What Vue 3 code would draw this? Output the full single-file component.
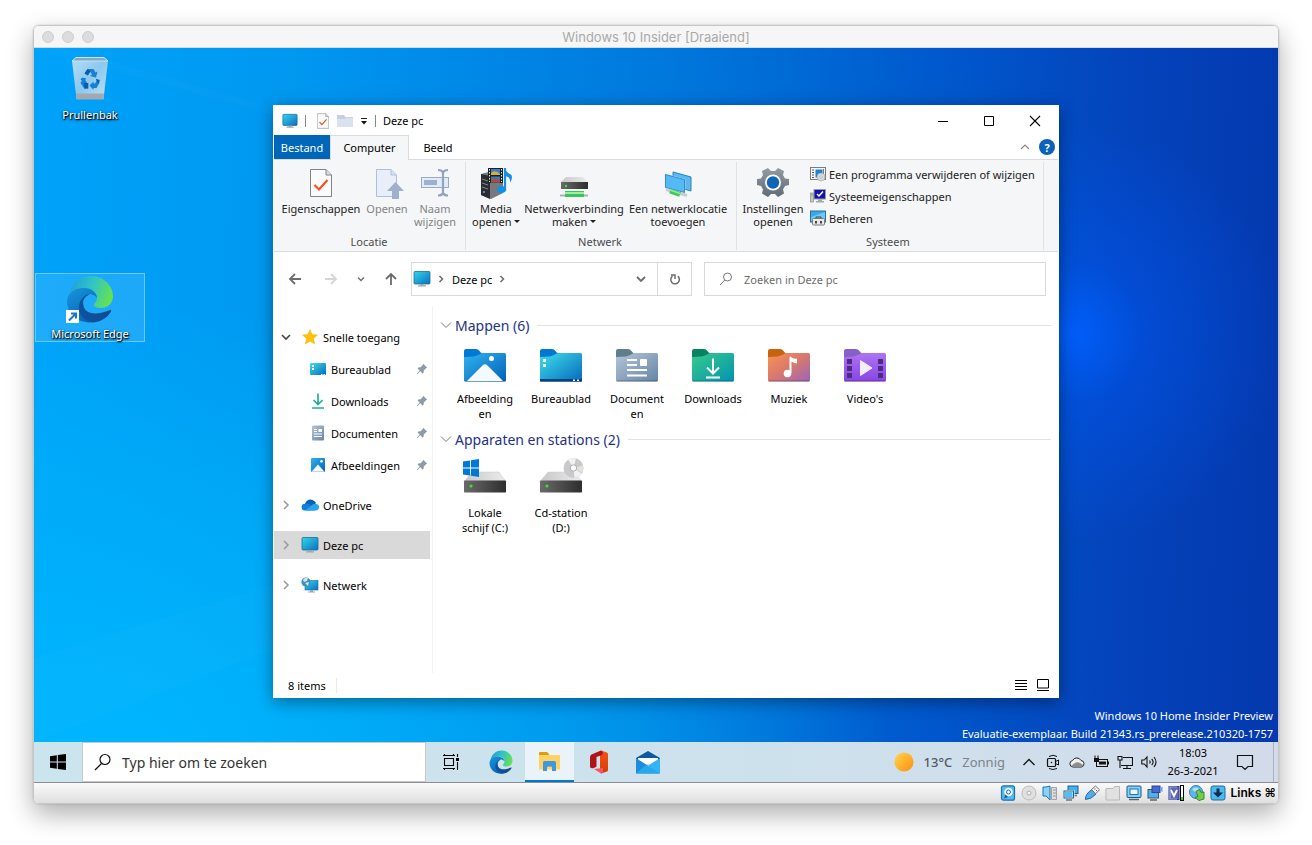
<script setup>
import { ref } from 'vue'

const quickAccess = [
  { label: 'Bureaublad', icon: 'i-desktop' },
  { label: 'Downloads', icon: 'i-download' },
  { label: 'Documenten', icon: 'i-document' },
  { label: 'Afbeeldingen', icon: 'i-picture' },
]
const roots = [
  { label: 'OneDrive', icon: 'i-onedrive' },
  { label: 'Deze pc', icon: 'i-monitor', active: true },
  { label: 'Netwerk', icon: 'i-network' },
]
const folders = [
  { label: 'Afbeeldingen', lines: ['Afbeelding', 'en'], kind: 'pictures' },
  { label: 'Bureaublad', lines: ['Bureaublad'], kind: 'desktop' },
  { label: 'Documenten', lines: ['Document', 'en'], kind: 'documents' },
  { label: 'Downloads', lines: ['Downloads'], kind: 'downloads' },
  { label: 'Muziek', lines: ['Muziek'], kind: 'music' },
  { label: "Video's", lines: ["Video's"], kind: 'videos' },
]
const tabColors = {
  pictures: '#0078d4',
  desktop: '#0078d4',
  documents: '#5f7d8c',
  downloads: '#068462',
  music: '#c5630f',
  videos: '#8661c5',
}
const systemLinks = [
  { label: 'Een programma verwijderen of wijzigen', icon: 'i-programs' },
  { label: 'Systeemeigenschappen', icon: 'i-sysprops' },
  { label: 'Beheren', icon: 'i-manage' },
]
const tray = [
  { label: 'Verborgen pictogrammen', icon: 't-chevron' },
  { label: 'Nu vergaderen', icon: 't-camera' },
  { label: 'OneDrive', icon: 't-cloud' },
  { label: 'Batterij', icon: 't-battery' },
  { label: 'Netwerk', icon: 't-network' },
  { label: 'Volume', icon: 't-volume' },
]
const vmIcons = [
  'v-disk', 'v-cd', 'v-audio', 'v-net', 'v-usb', 'v-folder',
  'v-display', 'v-record', 'v-cpu', 'v-mouse', 'v-key',
]
const query = ref('')
const taskQuery = ref('')
</script>

<template>
  <svg class="defs" aria-hidden="true">
    <defs>
      <linearGradient id="g-monitor" x1="0" y1="0" x2="1" y2="1"><stop offset="0" stop-color="#35d6e6" /><stop offset="1" stop-color="#0a6fc4" /></linearGradient>
      <linearGradient id="g-pictures" x1="0" y1="0" x2="1" y2="1"><stop offset="0" stop-color="#30b4f0" /><stop offset="1" stop-color="#0460b8" /></linearGradient>
      <linearGradient id="g-desktop" x1="0" y1="0" x2="1" y2="1"><stop offset="0" stop-color="#3fe0ea" /><stop offset="1" stop-color="#0668bd" /></linearGradient>
      <linearGradient id="g-documents" x1="0" y1="0" x2="1" y2="1"><stop offset="0" stop-color="#b4c6da" /><stop offset="1" stop-color="#6584a3" /></linearGradient>
      <linearGradient id="g-downloads" x1="0" y1="0" x2="1" y2="1"><stop offset="0" stop-color="#38cb88" /><stop offset="1" stop-color="#0393b2" /></linearGradient>
      <linearGradient id="g-music" x1="0" y1="0" x2="1" y2="1"><stop offset="0" stop-color="#fc9150" /><stop offset=".5" stop-color="#d8786e" /><stop offset="1" stop-color="#9964bb" /></linearGradient>
      <linearGradient id="g-videos" x1="0" y1="0" x2="0" y2="1"><stop offset="0" stop-color="#ad74f2" /><stop offset="1" stop-color="#8745e5" /></linearGradient>
      <linearGradient id="g-edge-top" x1="0" y1=".2" x2="1" y2=".5"><stop offset="0" stop-color="#1e9fd8" /><stop offset=".5" stop-color="#2fc4c8" /><stop offset="1" stop-color="#66e152" /></linearGradient>
      <linearGradient id="g-edge-left" x1="0" y1="0" x2=".6" y2="1"><stop offset="0" stop-color="#1797dc" /><stop offset="1" stop-color="#0a63b4" /></linearGradient>
      <linearGradient id="g-edge-dark" x1="0" y1="0" x2="1" y2="0"><stop offset="0" stop-color="#0c549f" /><stop offset="1" stop-color="#114b8f" /></linearGradient>
      <linearGradient id="g-steel" x1="0" y1="0" x2="1" y2="0"><stop offset="0" stop-color="#6a6a6a" /><stop offset="1" stop-color="#2e2e2e" /></linearGradient>
      <linearGradient id="g-lid" x1="0" y1="0" x2="1" y2="0"><stop offset="0" stop-color="#c8c8c8" /><stop offset="1" stop-color="#ebebed" /></linearGradient>
      <linearGradient id="g-bin" x1="0" y1="0" x2="1" y2="1"><stop offset="0" stop-color="#b5dff6" /><stop offset=".5" stop-color="#8cc8ee" /><stop offset="1" stop-color="#bfe1f5" /></linearGradient>
      <linearGradient id="g-sun" x1="0" y1="0" x2="1" y2="1"><stop offset="0" stop-color="#ffd84d" /><stop offset="1" stop-color="#ff8c0f" /></linearGradient>
      <linearGradient id="g-gear" x1="0" y1="0" x2="0" y2="1"><stop offset="0" stop-color="#929aa2" /><stop offset="1" stop-color="#616b75" /></linearGradient>
      <linearGradient id="g-office" x1="0" y1="0" x2="0" y2="1"><stop offset="0" stop-color="#f65314" /><stop offset="1" stop-color="#d83b01" /></linearGradient>
    </defs>

    <symbol id="i-monitor" viewBox="0 0 18 16">
      <rect x="1" y=".5" width="16" height="12.5" rx="1" fill="url(#g-monitor)" stroke="#1c6f96" stroke-width=".8" />
      <path d="M7.500 13h3v1.500h-3zM5 14.300h8v1.200H5z" fill="#9aa7b2" />
    </symbol>
    <symbol id="i-edge" viewBox="0 0 48 48">
      <path d="M3 22C4 10 13 1 25 1C38 1 47 11 47 21C47 29 41 33 35 33C31 33 28 32 28 30C28 28 31 27 31 23C31 17 26 13 19 13C11 13 5 17 3 22Z" fill="url(#g-edge-top)" />
      <path d="M1 26C2 17 9 13 18 13C25 13 31 18 31 23C29 20 26 19 23 19C17 22 15 30 20 38C23 43 27 46 30 47C14 50 1 40 1 26Z" fill="url(#g-edge-left)" />
      <path d="M17 27C17 40 30 41 44 35C46 35 45 37 44 38C40 44 32 48 26 47C17 46 12 38 13 31C14 24 19 19 24 19C20 21 17 24 17 27Z" fill="url(#g-edge-dark)" />
    </symbol>
    <symbol id="i-check" viewBox="0 0 22 28">
      <path d="M.5.5H16l5.500 5.500V27.500H.5Z" fill="#fbfbfb" stroke="#7e8487" />
      <path d="M16 .5V6h5.500" fill="#ddd" stroke="#7e8487" />
      <path d="M4.500 16l4.500 4.500L17.500 11" fill="none" stroke="#f4511e" stroke-width="2.200" />
    </symbol>
    <symbol id="i-star" viewBox="0 0 16 16"><path d="M8 .8l2.200 4.700 5.200.6-3.900 3.500 1.100 5.200L8 12.300l-4.600 2.500 1.100-5.200L.6 6.100l5.200-.6z" fill="#fdc30a" stroke="#f5ad00" stroke-width=".5" /></symbol>
    <symbol id="i-desktop" viewBox="0 0 16 16"><rect y="2" width="16" height="12" rx="1" fill="url(#g-desktop)" /><path d="M2 4h2v2H2zM2 7h2v2H2zM11 13h1.500v1H11zM13.500 13H15v1h-1.500z" fill="#fff" /></symbol>
    <symbol id="i-download" viewBox="0 0 16 16"><path d="M8 .5V11M3.500 7L8 11.500 12.500 7M2 15h12" fill="none" stroke="#1fb193" stroke-width="1.700" /></symbol>
    <symbol id="i-document" viewBox="0 0 16 16"><rect x="2" y=".5" width="12" height="15" rx="1" fill="url(#g-documents)" /><path d="M4 4.500h3M4 6.500h3M4 9h8M4 11.500h8" stroke="#fff" stroke-width="1.100" /><path d="M8.500 4h3.500v3H8.500z" fill="#fff" /></symbol>
    <symbol id="i-picture" viewBox="0 0 16 16"><rect x="1" y="1" width="14" height="14" rx="1" fill="url(#g-pictures)" /><path d="M1.500 14.800L8 7.500l6.500 7.300z" fill="#f3f9ff" /><circle cx="11.500" cy="4.300" r="1.300" fill="#fff" /></symbol>
    <symbol id="i-onedrive" viewBox="0 0 18 16"><path d="M4 7Q5 3 9 2.500q4 0 6 3.500L11 10H3z" fill="#0a5fb4" /><path d="M4 13.500a3.300 3.300 0 0 1 0-6.700q2.500-1 5 .7l5 6z" fill="#117fd8" /><path d="M4 13.500L11 8q2.500-2 4.500-1a3.300 3.300 0 0 1-1 6.500z" fill="#27a5ee" /></symbol>
    <symbol id="i-network" viewBox="0 0 18 16"><rect x="4" y="3.500" width="13" height="9.500" fill="url(#g-monitor)" stroke="#1c6f96" stroke-width=".6" /><path d="M9 13h3v1.500H9zM7 14.500h7v1H7z" fill="#9aa7b2" /><circle cx="5" cy="5" r="4.600" fill="#3f8fb8" /><path d="M2 3q2-3 5-2L6 4 3 5zM4 6l4-1-1 4z" fill="#cfe5ea" /></symbol>
    <symbol id="i-pin" viewBox="0 0 12 12"><path d="M7.200.8l4 4-1.200.4-2.200 2.200-.2 2.300-1 .8-2.300-2.300L1.200 11.200l-.5-.5L3.700 7.600 1.500 5.400l.8-.9 2.300-.3L6.800 2z" fill="#8e9ba5" /></symbol>
    <symbol id="i-programs" viewBox="0 0 16 16"><rect x=".5" y="1.500" width="15" height="12" fill="#f7f7f7" stroke="#7c7c7c" /><path d="M2 4h2M2 6.500h2M2 9h2M2 11.500h2" stroke="#555" /><path d="M5.500 3.500h7v8h-7z" fill="#1b83d6" /><path d="M13.500 3v5" stroke="#777" /><circle cx="11" cy="11" r="4" fill="#d7dbdf" stroke="#999" stroke-width=".5" /><circle cx="11" cy="11" r="1.200" fill="#fff" stroke="#888" stroke-width=".5" /></symbol>
    <symbol id="i-sysprops" viewBox="0 0 16 16"><rect x=".5" y="5" width="3" height="9" fill="#c3c8cb" stroke="#7a7f82" stroke-width=".6" /><rect x="4" y="1.500" width="11.500" height="9.500" fill="#1212b4" stroke="#9c9c9c" /><path d="M7 6l2 2 4-4.500" fill="none" stroke="#fff" stroke-width="1.500" /><path d="M8 11.500h4v1.500h2v1.500H6V13h2z" fill="#a3a8ab" /><circle cx="2" cy="7" r=".7" fill="#2dbd38" /></symbol>
    <symbol id="i-manage" viewBox="0 0 16 16"><rect x=".5" y="1" width="15" height="11" fill="#39a9ee" stroke="#2a6e99" /><path d="M1 7l14-5v9H1z" fill="#70c8f8" /><path d="M6 8.500V7h5v1.500" fill="none" stroke="#444" /><rect x="2.500" y="8.500" width="12" height="6.500" rx="1" fill="#e9e9e9" stroke="#7b7b7b" /><path d="M5 11h2v2.500H5zM10 11h2v2.500h-2z" fill="#444" /></symbol>
    <symbol id="i-drive" viewBox="0 0 44 22"><path d="M9 1h27l6.500 9h-41z" fill="url(#g-lid)" stroke="#cacaca" stroke-width=".5" /><rect x="1" y="9.500" width="42" height="12" rx=".8" fill="url(#g-steel)" /><circle cx="8" cy="15" r="1.600" fill="#38e238" /></symbol>

    <symbol id="t-chevron" viewBox="0 0 16 16"><path d="M2.500 11L8 5.500 13.500 11" fill="none" stroke="#111" stroke-width="1.300" /></symbol>
    <symbol id="t-camera" viewBox="0 0 16 16"><path d="M4 2.500q4-2.500 8 0M4 14.500q4 2 8 0" fill="none" stroke="#111" /><rect x="2.500" y="4.500" width="8" height="8" rx="1" fill="none" stroke="#111" stroke-width="1.200" /><path d="M10.500 7.500l3-1.500v5l-3-1.500" fill="none" stroke="#111" /><circle cx="6.500" cy="8.500" r=".8" fill="#111" /></symbol>
    <symbol id="t-cloud" viewBox="0 0 16 16"><path d="M3.800 13a3.300 3.300 0 0 1-.3-6.500A4.800 4.800 0 0 1 12 6.500a3.300 3.300 0 0 1 .5 6.500z" fill="#f0f0f0" stroke="#222" /><path d="M2 12.300q3-3.500 6-4t6.500 3.500l-2 .8H4z" fill="#8d8d8d" /></symbol>
    <symbol id="t-battery" viewBox="0 0 16 16"><rect x="3.500" y="5.500" width="11" height="7" fill="none" stroke="#111" /><path d="M6 7.500h7v3H6zM15 7.500h1v3h-1zM1 4h5v4H1z" fill="#111" /><path d="M2 1.500V4M5 1.500V4M3.500 8v3" stroke="#111" /></symbol>
    <symbol id="t-network" viewBox="0 0 16 16"><path d="M6 3.500h9.500v8H4M1 2.500h4v3.500H1zM3 6v8M10 11.500V14M6 14.500h8" fill="none" stroke="#111" stroke-width="1.100" /></symbol>
    <symbol id="t-volume" viewBox="0 0 16 16"><path d="M.8 6h2.500L6 3v10L3.300 10H.8zM8.500 6.500q1.300 1.500 0 3M10.700 4.800q2.800 3.200 0 6.400M13 3q4 5 0 10" fill="none" stroke="#111" stroke-width="1.100" /></symbol>

    <symbol id="v-disk" viewBox="0 0 16 16"><rect x="1.500" y=".8" width="13" height="14.400" rx="2" fill="#55b9ef" stroke="#1973b6" stroke-width="1.200" /><circle cx="8.500" cy="7" r="4.300" fill="#eef8fe" /><circle cx="8.500" cy="7" r="2" fill="none" stroke="#1772b5" /><path d="M4 13.500l1.500-4L8 12z" fill="#145c9b" /></symbol>
    <symbol id="v-cd" viewBox="0 0 16 16"><circle cx="8" cy="8" r="7" fill="#e0e0e0" stroke="#bcbcbc" /><circle cx="8" cy="8" r="2" fill="#f8f8f8" stroke="#aaa" /></symbol>
    <symbol id="v-audio" viewBox="0 0 16 16"><path d="M1 2h3l4-1v14l-4-4H1z" fill="#8ed1f5" stroke="#1b74b5" /><path d="M9.500 2.500h5v12h-5z" fill="#dedede" stroke="#a3a3a3" /><path d="M11 5h3M11 8h3M11 11h3" stroke="#999" /></symbol>
    <symbol id="v-net" viewBox="0 0 16 16"><rect x="5" y="1" width="10" height="7.500" fill="#3fb2f2" stroke="#215f88" /><path d="M9 10.500h5" stroke="#6c7780" stroke-width="1.500" /><rect x="1" y="6" width="9.500" height="7" fill="#54bdf5" stroke="#e9f4fb" stroke-width="2" /><rect x="1" y="6" width="9.500" height="7" fill="none" stroke="#215f88" /><path d="M3 15h6" stroke="#6c7780" stroke-width="1.500" /></symbol>
    <symbol id="v-usb" viewBox="0 0 16 16"><path d="M1.500 14.500Q1 9 8 4.500L12 9q-5 5.500-10.500 5.500z" fill="#52aee9" stroke="#1b6cab" /><path d="M7.500 4.500L11.500 1l4 3.800-4 4z" fill="#f4f4f4" stroke="#737373" /><path d="M10.500 4h1M12 5.500h1" stroke="#555" /></symbol>
    <symbol id="v-folder" viewBox="0 0 16 16"><path d="M1 3.500h7l1.500-2h5V15H1z" fill="#e1e1e1" stroke="#b8b8b8" /></symbol>
    <symbol id="v-display" viewBox="0 0 16 16"><rect x="1" y="1" width="14" height="11.500" rx="1" fill="#83d0f9" stroke="#20577c" /><rect x="4" y="4" width="8" height="5.500" fill="#e9f8ff" stroke="#1974b4" /><path d="M3 14.500h10" stroke="#496878" stroke-width="1.500" /></symbol>
    <symbol id="v-record" viewBox="0 0 16 16"><rect x="1" y="4.500" width="10.500" height="8.500" fill="#54afe4" stroke="#315b79" /><rect x="5" y="1" width="8" height="6.500" fill="#4369d2" stroke="#2c4594" /><path d="M13 3l2.500-1.500V7L13 5.500" fill="#7d98e7" /><path d="M3 15h7" stroke="#666" stroke-width="1.500" /></symbol>
    <symbol id="v-cpu" viewBox="0 0 16 16"><rect x="1" y="1.500" width="10" height="13" fill="#5b68bc" stroke="#2f3b88" /><path d="M3 5l3 6 3-6" fill="none" stroke="#fff" stroke-width="1.800" /><path d="M2 1v14M4 1v1.500M6 1v1.500M8 1v1.500M4 13.500V15M6 13.500V15M8 13.500V15" stroke="#cdd2f2" stroke-width=".8" /><rect x="12.500" y=".5" width="3" height="15" fill="#fff" stroke="#000" /><path d="M13 12h2v3h-2z" fill="#20e020" /></symbol>
    <symbol id="v-mouse" viewBox="0 0 16 16"><circle cx="7" cy="7" r="6.500" fill="#5fb4ee" stroke="#2f83c2" /><path d="M3 4q4-3 7 0l-4 3z" fill="#b7e0f8" /><path d="M7 6.500l3.500-2 1.500 3 3-.5V14l-5 1.500-4-3 3-1z" fill="#6fce4a" stroke="#3a8a2a" /></symbol>
    <symbol id="v-key" viewBox="0 0 16 16"><rect x="1" y="1" width="14" height="14" rx="2" fill="#4fb8ee" stroke="#1b6ea8" /><path d="M6.500 3.500h3v4H13L8 12.500 3 7.500h3.500z" fill="#0b2f4d" /></symbol>
  </svg>

  <main class="page">
    <section class="vm">
      <header class="vm-title">
        <span class="lights"><i></i><i></i><i></i></span>
        <h1>Windows 10 Insider [Draaiend]</h1>
      </header>

      <div class="desktop">
        <svg class="rays" viewBox="0 0 1244 694" preserveAspectRatio="none" aria-hidden="true">
          <path d="M0 0L30 0L700 190L1040 290Z" fill="#fff" opacity=".015" />
          <path d="M0 610L1040 290L0 694Z" fill="#fff" opacity=".015" />
        </svg>

        <button class="shortcut bin">
          <svg viewBox="0 0 40 46" width="40" height="46">
            <path d="M2 5L6 1.500H34L38 5 33.500 43H6.500Z" fill="url(#g-bin)" />
            <path d="M2 5L6 1.500H34L38 5Z" fill="#83a9c4" stroke="#c8e3f3" />
            <path d="M6 37.500H34L33.500 43.500H6.500Z" fill="#a3a9b3" />
            <g fill="#1580d4"><path d="M14.500 17.500l3-4.500h6l2 3.500 2-1-1.500 6-6-1.500 2-1.200-1.700-3-2.500 4z" /><path d="M12 21.500l4.500 1-1.300 1.200 2 3.300h1v5.500h-4L10.500 27l1.500-2.500-1.500-.8z" /><path d="M26 23l3.500 1-.2 3-2.800 5h-3v2l-4-4.500 4-4v2h1.500l1.500-2.500z" /></g>
            <path d="M14.500 17.500l3-4.500 3 2-2.500 4zM14 27h4.200v5.500h-4zM26 23l3.500 1-1 4z" fill="#0a5cae" />
          </svg>
          <span>Prullenbak</span>
        </button>

        <button class="shortcut edge">
          <svg viewBox="0 0 52 50" width="52" height="50">
            <use href="#i-edge" x="2" y="0" width="48" height="48" />
            <path d="M2 35h13v13H2z" fill="#fff" />
            <path d="M5 45.500l6-6M7 38.500h5v5" fill="none" stroke="#1a78c8" stroke-width="2" />
          </svg>
          <span>Microsoft Edge</span>
        </button>

        <p class="watermark">Windows 10 Home Insider Preview<br />Evaluatie-exemplaar. Build 21343.rs_prerelease.210320-1757</p>

        <section class="explorer">
          <header class="titlebar">
            <svg class="app-icon" width="16" height="16"><use href="#i-monitor" /></svg>
            <span class="bar"></span>
            <button class="quick" aria-label="Eigenschappen"><svg width="12" height="16"><use href="#i-check" /></svg></button>
            <button class="quick folder" aria-label="Nieuwe map"><svg width="16" height="14" viewBox="0 0 16 14"><path d="M0 1h7l1.500 2H16v10H0z" fill="#c5d1e2" /><path d="M0 5h8l1-1h7v9H0z" fill="#d8e2f0" /></svg></button>
            <button class="quick more" aria-label="Werkbalk aanpassen"><svg width="8" height="8" viewBox="0 0 8 8"><path d="M1 1.500h6" stroke="#222" /><path d="M1 4h6L4 7.500z" fill="#111" /></svg></button>
            <span class="bar"></span>
            <h2>Deze pc</h2>
            <div class="win-buttons">
              <button aria-label="Minimaliseren"><svg width="12" height="12" viewBox="0 0 12 12"><path d="M1 6.500h10" stroke="#000" /></svg></button>
              <button aria-label="Maximaliseren"><svg width="12" height="12" viewBox="0 0 12 12"><path d="M1.500 1.500h9v9h-9z" fill="none" stroke="#000" /></svg></button>
              <button aria-label="Sluiten"><svg width="12" height="12" viewBox="0 0 12 12"><path d="M1 1l10 10M11 1L1 11" stroke="#000" stroke-width="1.100" /></svg></button>
            </div>
          </header>

          <nav class="tabs">
            <button class="file">Bestand</button>
            <button class="current">Computer</button>
            <button class="plain">Beeld</button>
            <span class="spacer"></span>
            <button class="collapse" aria-label="Lint samenvouwen"><svg width="10" height="10" viewBox="0 0 10 10"><path d="M1 7l4-4 4 4" fill="none" stroke="#8a8a8a" stroke-width="1.200" /></svg></button>
            <button class="help" aria-label="Help">?</button>
          </nav>

          <div class="ribbon">
            <section class="group location">
              <div class="tools">
                <button class="tool w84"><svg width="34" height="34" viewBox="0 0 34 34"><use href="#i-check" x="6" y="3" width="22" height="28" /></svg>Eigenschappen</button>
                <button class="tool w48" disabled><svg width="34" height="34" viewBox="0 0 34 34"><path d="M6.500 3.500H21l5.500 5.500V30.500H6.500Z" fill="#e8effa" stroke="#aebfda" /><path d="M21 3.500V9h5.500" fill="#d5e0f0" stroke="#aebfda" /><path d="M22 33V25h-5L25.500 16 34 25h-5v8z" fill="#9fb0cc" /></svg>Openen</button>
                <button class="tool w48" disabled><svg width="34" height="34" viewBox="0 0 34 34"><rect x="3.500" y="11.500" width="27" height="10" fill="#e3ebf7" stroke="#9aaac6" /><path d="M6 14h13v5H6z" fill="#9fb0cc" /><path d="M20 4q4 0 5 2.500Q26 4 30 4M20 29.500q4 0 5-2.500 1 2.500 5 2.500M25 6v22" fill="none" stroke="#93a4c3" stroke-width="2.200" /></svg>Naam<br />wijzigen</button>
              </div>
              <h3>Locatie</h3>
            </section>

            <section class="group network">
              <div class="tools">
                <button class="tool w48">
                  <svg width="34" height="34" viewBox="0 0 34 34">
                    <path d="M2 8l11-3 11 4v18l-12 6L2 29z" fill="#77797e" /><path d="M2 8l9 2v23l-9-4z" fill="#2a2c31" /><path d="M3 13l6 2M3 17l6 2M3 21l6 2" stroke="#80858c" /><circle cx="5" cy="26" r="1" fill="#40b8f5" />
                    <rect x="9" y="2" width="15" height="15" fill="#202020" /><path d="M12 3h9v6h-9z" fill="#3c7cc8" /><path d="M12 7q4-4 9 1v1h-9z" fill="#d6ae3a" /><path d="M12 10.500h9v6h-9z" fill="#3579ba" /><path d="M12 14q4-3 9 1v1.500h-9z" fill="#b4493b" />
                    <path d="M10.500 3v13M22.500 3v13" stroke="#eee" stroke-dasharray="1.500 1.500" />
                    <path d="M26 2v21" stroke="#1191e6" stroke-width="2.200" /><path d="M26 2q1 4 5 6t0 9q1-6-5-7z" fill="#1191e6" /><ellipse cx="22.500" cy="23.500" rx="4.800" ry="3.500" fill="#1191e6" />
                  </svg>Media<br />openen <i class="caret"></i>
                </button>
                <button class="tool w108">
                  <svg width="34" height="34" viewBox="0 0 34 34">
                    <path d="M9 11h17l5 5H4z" fill="url(#g-lid)" /><rect x="4" y="16" width="27" height="7" fill="url(#g-steel)" /><circle cx="9" cy="20" r="1.200" fill="#3be53b" />
                    <path d="M3 29.500h28" stroke="#aab2b5" stroke-width="2" /><rect x="8" y="25" width="19" height="6" fill="#3cc45a" /><path d="M8 27h19" stroke="#9cf0a2" stroke-width="2" />
                  </svg>Netwerkverbinding<br />maken <i class="caret"></i>
                </button>
                <button class="tool w100">
                  <svg width="34" height="34" viewBox="0 0 34 34">
                    <path d="M12 6l18 5v14l-18-5z" fill="#5ab9f2" stroke="#2b82b8" /><path d="M4.500 8.500l19 5v13l-19-5z" fill="#53b9f8" stroke="#d8eef9" stroke-width="1.500" /><path d="M4.500 8.500l19 5v13l-19-5z" fill="#53b9f8" stroke="#2878ad" stroke-width=".8" />
                    <path d="M5 23.500l21 6" stroke="#c8cdcf" stroke-width="3" /><path d="M9 25l10 3.500" stroke="#40c857" stroke-width="5" /><path d="M9 24l10 3.500" stroke="#93ec99" stroke-width="1.500" />
                  </svg>Een netwerklocatie<br />toevoegen
                </button>
              </div>
              <h3>Netwerk</h3>
            </section>

            <section class="group system">
              <div class="tools">
                <button class="tool w64">
                  <svg width="34" height="34" viewBox="0 0 34 34">
                    <path d="M12 2l3 3h4l3-3 6 3-1 4 2 3.500 4 .5v6l-4 1-2 3.500 1 4-6 3.500-3-3h-4l-3 3-6-3.500 1-4L5 20l-4-1v-6l4-.5L7 9 6 5z" fill="url(#g-gear)" />
                    <circle cx="17" cy="16.500" r="8" fill="#fff" /><circle cx="17" cy="16.500" r="6.200" fill="#0f66b8" />
                  </svg>Instellingen<br />openen
                </button>
                <ul class="sys-list">
                  <li v-for="item in systemLinks" :key="item.label"><button><svg width="16" height="16"><use :href="'#' + item.icon" /></svg>{{ item.label }}</button></li>
                </ul>
              </div>
              <h3>Systeem</h3>
            </section>
          </div>

          <div class="address-row">
            <div class="history">
              <button aria-label="Vorige"><svg width="14" height="14" viewBox="0 0 14 14"><path d="M13 7H2M7 2L2 7l5 5" fill="none" stroke="#6c6c6c" stroke-width="1.800" /></svg></button>
              <button aria-label="Volgende" disabled><svg width="14" height="14" viewBox="0 0 14 14"><path d="M1 7h11M7 2l5 5-5 5" fill="none" stroke="#d5d5d5" stroke-width="1.800" /></svg></button>
              <button class="narrow" aria-label="Recente locaties"><svg width="8" height="8" viewBox="0 0 8 8"><path d="M1 2.500l3 3 3-3" fill="none" stroke="#6c6c6c" stroke-width="1.400" /></svg></button>
              <button aria-label="Omhoog"><svg width="14" height="14" viewBox="0 0 14 14"><path d="M7 13V2M2 7l5-5 5 5" fill="none" stroke="#6c6c6c" stroke-width="1.800" /></svg></button>
            </div>
            <div class="address">
              <svg width="18" height="16"><use href="#i-monitor" /></svg>
              <svg class="sep" width="6" height="8" viewBox="0 0 6 8"><path d="M1.500 1L4.500 4l-3 3" fill="none" stroke="#6c6c6c" stroke-width="1.500" /></svg>
              <button class="crumb">Deze pc</button>
              <svg class="sep" width="6" height="8" viewBox="0 0 6 8"><path d="M1.500 1L4.500 4l-3 3" fill="none" stroke="#6c6c6c" stroke-width="1.500" /></svg>
              <span class="spacer"></span>
              <button class="drop" aria-label="Vorige locaties"><svg width="10" height="8" viewBox="0 0 10 8"><path d="M1 2l4 4 4-4" fill="none" stroke="#6c6c6c" stroke-width="1.800" /></svg></button>
              <button class="refresh" aria-label="Vernieuwen"><svg width="14" height="14" viewBox="0 0 14 14"><path d="M9.800 4.200A4.300 4.300 0 1 1 4.500 4.100M3 3h4v4" fill="none" stroke="#6c6c6c" stroke-width="1.500" /></svg></button>
            </div>
            <label class="search">
              <svg width="14" height="14" viewBox="0 0 14 14"><circle cx="8.500" cy="5" r="4" fill="none" stroke="#777" /><path d="M5.800 8L1 13" stroke="#777" /></svg>
              <input v-model="query" type="text" placeholder="Zoeken in Deze pc" aria-label="Zoeken in Deze pc" />
            </label>
          </div>

          <div class="panes">
            <nav class="tree">
              <button class="row"><svg class="twisty" width="10" height="10" viewBox="0 0 10 10"><path d="M1 3l4 4 4-4" fill="none" stroke="#444" stroke-width="1.600" /></svg><svg width="18" height="16"><use href="#i-star" /></svg>Snelle toegang</button>
              <button v-for="item in quickAccess" :key="item.label" class="row child">
                <svg width="16" height="16"><use :href="'#' + item.icon" /></svg>{{ item.label }}
                <svg class="pin" width="12" height="12"><use href="#i-pin" /></svg>
              </button>
              <button v-for="item in roots" :key="item.label" class="row root" :class="{ active: item.active }">
                <svg class="twisty" width="10" height="10" viewBox="0 0 10 10"><path d="M3 1l4 4-4 4" fill="none" stroke="#999" stroke-width="1.500" /></svg>
                <svg width="18" height="16"><use :href="'#' + item.icon" /></svg>{{ item.label }}
              </button>
            </nav>

            <div class="content">
              <section class="block">
                <h3><svg width="12" height="12" viewBox="0 0 12 12"><path d="M1 3.500l5 5 5-5" fill="none" stroke="#777" /></svg>Mappen (6)</h3>
                <div class="tiles">
                  <button v-for="f in folders" :key="f.label" class="tile">
                    <svg width="44" height="48" viewBox="0 0 44 48">
                      <g transform="translate(0 7)">
                        <path d="M1 3q0-2 2-2h10q2 0 3.500 2t3 2.500V10H1z" :fill="tabColors[f.kind]" />
                        <path d="M1 9q12 0 15-2.500Q18 5 20 5H41.500q1.500 0 1.500 1.500V32q0 1.500-1.500 1.500H2.500Q1 33.500 1 32z" :fill="'url(#g-' + f.kind + ')'" />
                        <path d="M1.500 33h41" stroke="#000" stroke-opacity=".3" />
                        <g v-if="f.kind === 'pictures'" fill="#fff"><path d="M4 33L19.500 17.500Q22 15 24.500 17.500L40 33z" fill="#f2f9ff" /><circle cx="28.500" cy="10.500" r="2.500" /></g>
                        <g v-else-if="f.kind === 'desktop'" fill="#fff"><path d="M1 31h42v2.500H1z" fill="#053f83" /><path d="M4 11h3v3H4zM4 16h3v3H4zM34 31.500h2v1.500h-2zM38 31.500h2v1.500h-2z" /></g>
                        <g v-else-if="f.kind === 'documents'"><path d="M12 12h10M12 17h10M12 22h20M12 27.500h20" stroke="#fff" stroke-width="2" /><rect x="25" y="11" width="7" height="7" rx="1" fill="#fff" /></g>
                        <path v-else-if="f.kind === 'downloads'" d="M22 10.500V25M16 19.500l6 6 6-6M15 29.500h14" fill="none" stroke="#fff" stroke-width="2" />
                        <g v-else-if="f.kind === 'music'" fill="#fff"><path d="M22.500 9l1-.5q3 3 6.500 2v5q-3 0-5.500-2V25h-2z" /><circle cx="20.500" cy="25.500" r="3.800" /></g>
                        <g v-else><path d="M4 11h5v5H4zM4 18h5v5H4zM4 25h5v5H4zM35 11h5v5h-5zM35 18h5v5h-5zM35 25h5v5h-5z" fill="#4c2b80" /><path d="M17.500 12.500v15L29 20z" fill="#f4eefb" stroke="#f4eefb" stroke-linejoin="round" /></g>
                      </g>
                    </svg>
                    <span><template v-for="(line, n) in f.lines" :key="line"><br v-if="n" />{{ line }}</template></span>
                  </button>
                </div>
              </section>

              <section class="block">
                <h3><svg width="12" height="12" viewBox="0 0 12 12"><path d="M1 3.500l5 5 5-5" fill="none" stroke="#777" /></svg>Apparaten en stations (2)</h3>
                <div class="tiles">
                  <button class="tile">
                    <svg width="44" height="48" viewBox="0 0 44 48">
                      <use href="#i-drive" x="0" y="16" width="44" height="22" />
                      <path d="M0 6.500l7-1v7H0zM8 5.300L16 4v8.500H8zM0 13.500h7v7l-7-1zM8 13.500h8V22l-8-1.200z" fill="#0078d7" />
                    </svg>
                    <span>Lokale<br />schijf (C:)</span>
                  </button>
                  <button class="tile">
                    <svg width="46" height="48" viewBox="0 0 46 48">
                      <use href="#i-drive" x="1" y="16" width="44" height="22" />
                      <circle cx="35.500" cy="13" r="10" fill="#c9c9cb" /><path d="M35.500 13L30 4.500Q34 2 38 3.500zM35.500 13l8 5.500q-3 4-7 4.200z" fill="#f2f2f4" /><path d="M35.500 13l9.500-2.500q1 4-1 7z" fill="#dfe5da" /><circle cx="35.500" cy="13" r="3.200" fill="#fff" stroke="#adadad" />
                    </svg>
                    <span>Cd-station<br />(D:)</span>
                  </button>
                </div>
              </section>
            </div>
          </div>

          <footer class="status">
            <span class="count">8 items</span>
            <span class="spacer"></span>
            <button aria-label="Details"><svg width="12" height="12" viewBox="0 0 12 12"><path d="M0 1.500h12M0 4.500h12M0 7.500h12M0 10.500h12" stroke="#000" /></svg></button>
            <button aria-label="Grote pictogrammen"><svg width="12" height="12" viewBox="0 0 12 12"><path d="M.5.5h11v8.500H.5zM0 11.500h12" fill="none" stroke="#000" /></svg></button>
          </footer>
        </section>
      </div>

      <footer class="taskbar">
        <button class="start" aria-label="Start"><svg width="16" height="16" viewBox="0 0 16 16"><path d="M0 2.200l6.800-1v6.300H0zM7.800 1L16 0v7.500H7.800zM0 8.500h6.800v6.300l-6.800-1zM7.800 8.500H16V16l-8.200-1z" fill="#000" /></svg></button>
        <label class="task-search">
          <svg width="18" height="18" viewBox="0 0 18 18"><circle cx="11" cy="6.500" r="5" fill="none" stroke="#111" stroke-width="1.200" /><path d="M7.500 10.500L1 17" stroke="#111" stroke-width="1.200" /></svg>
          <input v-model="taskQuery" type="text" placeholder="Typ hier om te zoeken" aria-label="Typ hier om te zoeken" />
        </label>
        <div class="apps">
          <button aria-label="Taakweergave"><svg width="16" height="16" viewBox="0 0 16 16"><path d="M1.500 4.500h9v7h-9zM0 1.500h12M0 14.500h12M1.500 0v1.500M10.500 0v1.500M1.500 14.500V16M10.500 14.500V16M14.500 0v3M14.500 8v8" fill="none" stroke="#000" stroke-width="1.100" /><path d="M13 4h3v3h-3z" /></svg></button>
          <button aria-label="Microsoft Edge"><svg width="24" height="24"><use href="#i-edge" /></svg></button>
          <button class="open" aria-label="Verkenner"><svg width="22" height="22" viewBox="0 0 22 22"><path d="M0 3q0-1 1-1h7l2 2v3H0z" fill="#dd9c08" /><path d="M0 5h21v14.500H0z" fill="#fed264" /><path d="M4 21v-8.500q0-1.500 1.500-1.500h10q1.500 0 1.500 1.500V21h-4v-3.500q0-1-1-1H9q-1 0-1 1V21z" fill="#3f97de" /></svg></button>
          <button aria-label="Office"><svg width="18" height="24" viewBox="0 0 18 24"><path d="M11 .5L17 2.500Q18 3 18 4v16q0 1-1 1.500l-6 2q-1-1-1-3V5z" fill="url(#g-office)" /><path d="M11 .5Q14 2 12 5L6.500 7v9.500L4 18q-3 1-4-1V7q0-1.500 1.500-2.500z" fill="#b01318" /><path d="M4 19l9-1v3q0 3-2 2.500z" fill="#f3566b" /></svg></button>
          <button aria-label="Mail"><svg width="24" height="24" viewBox="0 0 24 24"><path d="M0 8L12 1l12 7v5H0z" fill="#0c59a4" /><path d="M2 8h20v6H2z" fill="#fff" /><path d="M0 8l24 15.500H0z" fill="#1b8ddf" /><path d="M24 8L10 17l14 6.500z" fill="#32b5f2" /><path d="M0 23.500h24L10 15z" fill="#28a8ea" /></svg></button>
        </div>
        <span class="spacer"></span>
        <button class="weather"><svg width="20" height="20" viewBox="0 0 20 20"><circle cx="10" cy="10" r="9.500" fill="url(#g-sun)" /></svg><b>13°C</b><span>Zonnig</span></button>
        <div class="tray">
          <button v-for="t in tray" :key="t.icon" :aria-label="t.label"><svg width="16" height="16"><use :href="'#' + t.icon" /></svg></button>
        </div>
        <button class="clock"><time>18:03<br />26-3-2021</time></button>
        <button class="notify" aria-label="Meldingen"><svg width="18" height="18" viewBox="0 0 18 18"><path d="M1.500 2.500h15v11h-4.500L9 16.500 6 13.500H1.500z" fill="none" stroke="#111" stroke-width="1.200" /></svg></button>
        <button class="peek" aria-label="Bureaublad weergeven"></button>
      </footer>

      <footer class="vm-status">
        <svg v-for="icon in vmIcons" :key="icon" width="16" height="16" aria-hidden="true"><use :href="'#' + icon" /></svg>
        <span>Links ⌘</span>
      </footer>
    </section>
  </main>
</template>

<style>
body {
  background: #fff;
}
</style>

<style scoped>
* {
  box-sizing: border-box;
}
.defs {
  position: absolute;
  width: 0;
  height: 0;
}
h1, h2, h3, p, ul {
  margin: 0;
  padding: 0;
  font-weight: 400;
}
ul {
  list-style: none;
}
button {
  margin: 0;
  padding: 0;
  border: 0;
  background: none;
  color: inherit;
  font: inherit;
}
input {
  flex: 1;
  min-width: 0;
  height: 100%;
  padding: 0;
  border: 0;
  outline: 0;
  background: none;
  font: inherit;
  color: inherit;
}
svg {
  flex: none;
  display: block;
}
.spacer {
  flex: 1;
}
.page {
  height: 100vh;
  min-height: 700px;
  padding: 25px 33px 41px;
  font: 11px/15px "Noto Sans", "Open Sans", sans-serif;
  color: #000;
  overflow: hidden;
}
.vm {
  display: flex;
  flex-direction: column;
  height: 100%;
  border: 1px solid #c6c6c6;
  border-radius: 6px;
  overflow: hidden;
  box-shadow: 0 10px 26px rgba(0, 0, 0, .32), 0 0 2px rgba(0, 0, 0, .2);
}
.vm-title {
  display: grid;
  grid-template-columns: 60px 1fr 60px;
  align-items: center;
  flex: none;
  height: 22px;
  background: #f6f6f6;
  border-bottom: 1px solid #d8d8d8;
}
.lights {
  display: flex;
  gap: 8px;
  padding-left: 8px;
}
.lights i {
  flex: none;
  width: 12px;
  height: 12px;
  border: 1px solid #cdcdcd;
  border-radius: 50%;
  background: #dcdcdc;
}
.vm-title h1 {
  text-align: center;
  font: 13px/20px Inter, sans-serif;
  color: #a9a9a9;
}

.desktop {
  position: relative;
  flex: 1;
  min-height: 0;
  background:
    radial-gradient(circle at 1040px 285px, rgba(0, 96, 255, .9) 0, rgba(0, 90, 250, .4) 70px, rgba(0, 80, 230, 0) 210px),
    radial-gradient(ellipse 780px 440px at 6% 100%, rgba(0, 184, 255, .9) 0, rgba(0, 180, 250, .5) 60%, rgba(0, 170, 250, 0) 100%),
    linear-gradient(92deg, #00a3fa 0, #0098f0 20%, #0078dc 50%, #0058cc 72%, #0444bc 86%, #0438ae 100%);
}
.rays {
  width: 100%;
  height: 100%;
}
.shortcut {
  position: absolute;
  left: 1px;
  display: flex;
  flex-direction: column;
  align-items: center;
  width: 110px;
  color: #fff;
  text-shadow: 1px 1px 1px #000, 0 1px 3px #000;
}
.bin {
  top: 8px;
  gap: 5px;
}
.edge {
  top: 225px;
  height: 69px;
  padding-top: 1px;
  gap: 1px;
  border: 1px solid rgba(160, 222, 255, .6);
  background: rgba(120, 200, 255, .25);
}
.watermark {
  position: absolute;
  right: 5px;
  bottom: -1px;
  color: #fff;
  line-height: 18px;
  text-align: right;
}

.explorer {
  position: absolute;
  inset: 57px 219px 44px 239px;
  display: flex;
  flex-direction: column;
  border: 1px solid #fdfdfd;
  background: #fff;
  box-shadow: 0 4px 16px rgba(0, 0, 0, .4);
}
.titlebar {
  display: flex;
  align-items: center;
  flex: none;
  height: 29px;
  padding-left: 8px;
}
.bar {
  width: 1px;
  height: 12px;
  margin: 0 11px 0 7px;
  background: #888;
}
.quick.folder {
  margin: 0 7px 0 8px;
}
.quick.more + .bar {
  margin: 0 7px;
}
.titlebar h2 {
  font-size: 11px;
}
.win-buttons {
  display: flex;
  margin-left: auto;
}
.win-buttons button {
  display: grid;
  place-items: center;
  width: 46px;
  height: 29px;
}

.tabs {
  display: flex;
  flex: none;
  height: 25px;
  border-bottom: 1px solid #dadbdc;
}
.tabs .file {
  width: 56px;
  height: 24px;
  background: #0067b8;
  color: #fff;
}
.tabs .current {
  width: 79px;
  height: 25px;
  padding-bottom: 2px;
  border: 1px solid #dadbdc;
  border-bottom: 0;
  background: #f5f6f7;
}
.tabs .plain {
  width: 58px;
}
.tabs .collapse {
  margin-right: 9px;
}
.tabs .help {
  align-self: center;
  width: 16px;
  height: 16px;
  margin-right: 3px;
  border-radius: 50%;
  background: #0a63b8;
  color: #fff;
  font-weight: 700;
}

.ribbon {
  display: flex;
  flex: none;
  height: 92px;
  padding: 2px 0 1px;
  border-bottom: 1px solid #dadbdc;
  background: #f5f6f7;
  color: #222;
}
.group {
  display: flex;
  flex-direction: column;
  justify-content: space-between;
  border-right: 1px solid #e0e1e2;
}
.group h3 {
  text-align: center;
  font-size: 11px;
  line-height: 16px;
  color: #4c4c4c;
}
.location {
  padding: 0 6px 0 5px;
}
.network {
  padding: 0 8px 0 6px;
}
.system {
  padding: 0 8px 0 4px;
}
.tools {
  display: flex;
  align-items: flex-start;
}
.tool {
  padding-top: 4px;
  line-height: 13px;
  text-align: center;
  white-space: nowrap;
}
.tool svg {
  margin: 0 auto 2px;
}
.tool:disabled {
  color: #838383;
}
.w48 { width: 48px; }
.w64 { width: 64px; }
.w84 { width: 84px; }
.w100 { width: 100px; }
.w108 { width: 108px; }
.caret {
  display: inline-block;
  border: 3px solid transparent;
  border-top-color: #222;
  border-bottom: 0;
  vertical-align: 3px;
}
.sys-list {
  padding: 1px 0 0 5px;
}
.sys-list button {
  display: flex;
  align-items: center;
  gap: 3px;
  height: 22px;
  white-space: nowrap;
}

.address-row {
  display: grid;
  grid-template-columns: auto minmax(0, 281fr) minmax(0, 354fr);
  align-items: center;
  flex: none;
  height: 54px;
  padding-right: 12px;
}
.history {
  display: flex;
  padding: 0 2px 0 3px;
}
.history button {
  display: grid;
  place-items: center;
  width: 36px;
  height: 34px;
}
.history .narrow {
  width: 24px;
}
.address, .search {
  display: flex;
  align-items: center;
  height: 34px;
  border: 1px solid #d9d9d9;
}
.address {
  padding-left: 1px;
}
.sep {
  margin: 0 8px 0 7px;
}
.drop {
  width: 32px;
  display: grid;
  place-items: center;
}
.refresh {
  display: grid;
  place-items: center;
  width: 34px;
  height: 32px;
  border-left: 1px solid #d9d9d9;
}
.search {
  gap: 11px;
  margin-left: 12px;
  padding-left: 14px;
  color: #6d6d6d;
}
input::placeholder {
  color: inherit;
  opacity: 1;
}

.panes {
  display: flex;
  flex: 1;
  min-height: 0;
}
.tree {
  display: flex;
  flex-direction: column;
  flex: none;
  width: 159px;
  padding: 17px 2px 0 0;
  border-right: 1px solid #f2f2f2;
}
.row {
  display: flex;
  align-items: center;
  flex: none;
  gap: 4px;
  height: 28px;
  margin-bottom: 4px;
  padding-left: 7px;
  text-align: left;
  white-space: nowrap;
}
.row .twisty {
  margin-right: 6px;
}
.row.child {
  padding-left: 36px;
  gap: 5px;
}
.row .pin {
  margin: 0 2px 0 auto;
}
.row.root {
  margin-top: 8px;
}
.row.active {
  background: #d9d9d9;
}
.content {
  flex: 1;
  padding: 8px 7px 0;
}
.block {
  margin-bottom: 7px;
}
.block h3 {
  display: flex;
  align-items: center;
  gap: 3px;
  height: 22px;
  margin-bottom: 5px;
  color: #1e3287;
  font-size: 14px;
}
.block h3::after {
  content: "";
  flex: 1;
  height: 1px;
  margin-left: 5px;
  background: #e2e2e2;
}
.tiles {
  display: flex;
  flex-wrap: wrap;
  padding-left: 7px;
}
.tile {
  display: flex;
  flex-direction: column;
  align-items: center;
  gap: 2px;
  width: 76px;
  height: 80px;
}
.status {
  display: flex;
  align-items: center;
  flex: none;
  gap: 10px;
  height: 24px;
  padding: 0 9px 0 14px;
}
.count {
  padding-right: 10px;
  border-right: 1px solid #e8e8e8;
}

.taskbar {
  display: flex;
  align-items: center;
  flex: none;
  height: 41px;
  border-bottom: 1px solid #8c8c94;
  background: linear-gradient(90deg, #cbe5ee, #cde1ed 60%, #d3dbea);
}
.start {
  display: grid;
  place-items: center;
  width: 48px;
  height: 40px;
}
.task-search {
  display: flex;
  align-items: center;
  flex: 0 1 344px;
  gap: 10px;
  height: 40px;
  padding-left: 11px;
  border: 1px solid #c9c9c9;
  background: #fff;
  color: #333;
  font-size: 14px;
}
.apps {
  display: flex;
}
.apps button {
  display: grid;
  place-items: center;
  width: 49px;
  height: 40px;
}
.apps button:first-child {
  width: 50px;
}
.apps .open {
  border-bottom: 2px solid #0078d7;
  background: #eaf2fa;
}
.weather {
  display: flex;
  align-items: center;
  gap: 10px;
  margin-right: 12px;
  font-size: 13px;
  color: #7d8289;
}
.weather b {
  font-weight: 500;
  color: #555a61;
}
.tray {
  display: flex;
}
.tray button {
  padding: 0 4px;
}
.clock {
  width: 64px;
  text-align: center;
  line-height: 18px;
  white-space: nowrap;
}
.notify {
  display: grid;
  place-items: center;
  width: 40px;
  margin-right: 8px;
}
.peek {
  width: 5px;
  height: 40px;
  border-left: 1px solid #a9b3c3;
}
.vm-status {
  display: flex;
  align-items: center;
  justify-content: flex-end;
  flex: none;
  gap: 5px;
  height: 20px;
  padding-right: 2px;
  background: linear-gradient(#fafafa, #dfdfdf);
  font: 600 12px/20px Inter, "DejaVu Sans", sans-serif;
}
</style>
